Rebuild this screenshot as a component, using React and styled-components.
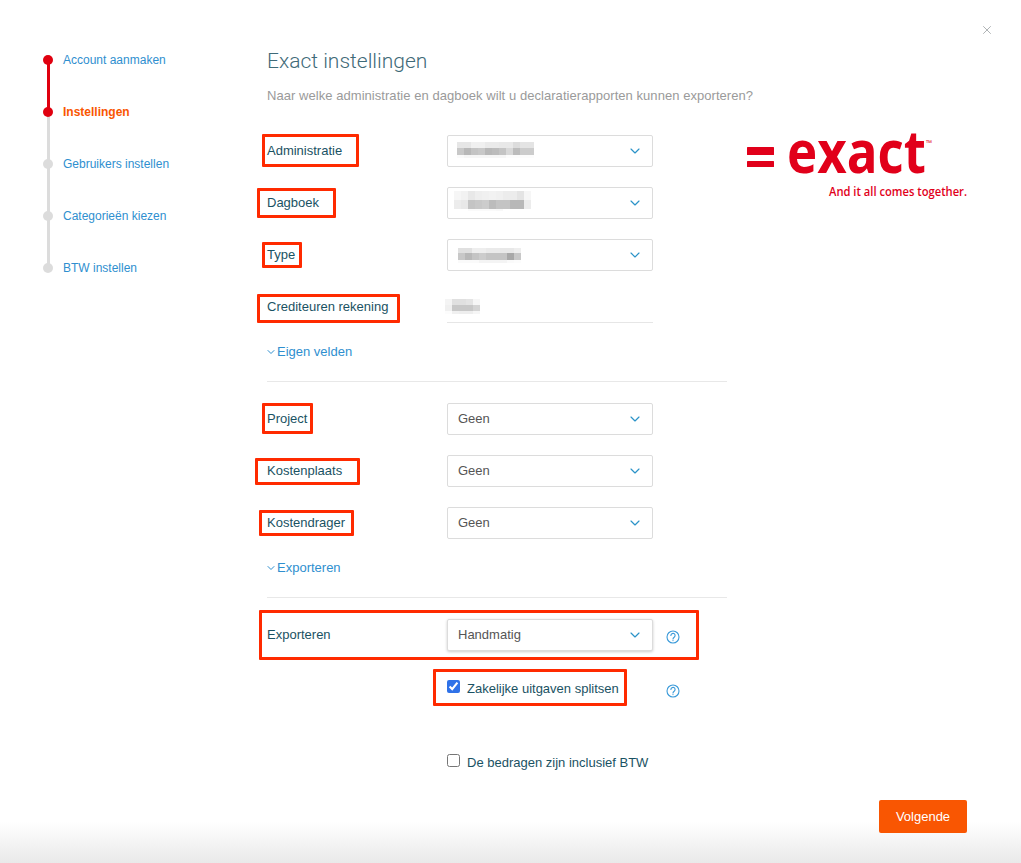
import React from "react";
import styled, { createGlobalStyle } from "styled-components";
import { ChevronDown, X } from "lucide-react";

const GlobalStyle = createGlobalStyle`
  html, body {
    margin: 0;
    padding: 0;
    background: #fff;
  }
  body {
    font-family: "Liberation Sans", Arial, sans-serif;
    font-size: 13px;
    color: #1a5263;
  }
`;

const Page = styled.div`
  position: relative;
  display: flex;
  width: 1021px;
  height: 863px;
  overflow: hidden;
  background: linear-gradient(to bottom, #fff 0, #fff 822px, #e9e9e9 863px);
`;

const CloseButton = styled.button`
  position: absolute;
  top: 23px;
  right: 27px;
  display: flex;
  padding: 0;
  border: 0;
  background: none;
  color: #a3a8aa;
`;

const Sidebar = styled.nav`
  width: 267px;
  flex: none;
  padding-top: 34px;
  box-sizing: border-box;
`;

const Step = styled.div`
  position: relative;
  display: flex;
  align-items: center;
  gap: 10px;
  height: 52px;
  padding-left: 43px;
  box-sizing: border-box;
  font-size: 12px;
  color: ${(p) => (p.$current ? "#f95602" : "#2f8fcf")};
  font-weight: ${(p) => (p.$current ? 700 : 400)};

  &::after {
    content: "";
    display: ${(p) => (p.$last ? "none" : "block")};
    position: absolute;
    left: 46.5px;
    top: 26px;
    width: 3px;
    height: 52px;
    background: ${(p) => (p.$done ? "#e0000f" : "#dcdcdc")};
  }
`;

const StepDot = styled.span`
  position: relative;
  z-index: 1;
  width: 10px;
  height: 10px;
  border-radius: 50%;
  background: ${(p) => (p.$active ? "#e0000f" : "#dcdcdc")};
`;

const Main = styled.main`
  flex: 1;
  min-width: 0;
  padding: 46px 54px 0 0;
`;

const Title = styled.h1`
  margin: 0;
  font-family: Roboto, "Liberation Sans", sans-serif;
  font-size: 21px;
  line-height: 30px;
  font-weight: 300;
  color: #3f6a78;
`;

const Subtitle = styled.p`
  margin: 10px 0 29px;
  font-size: 13px;
  line-height: 20px;
  letter-spacing: 0.05px;
  color: #9a9a9a;
`;

const Body = styled.div`
  display: flex;
  gap: 20px;
`;

const Form = styled.div`
  width: 460px;
  flex: none;
`;

const Row = styled.div`
  position: relative;
  display: flex;
  align-items: center;
  height: 32px;
  margin-bottom: ${(p) => (p.$tight ? 0 : "20px")};
`;

const Label = styled.label`
  width: 180px;
  flex: none;
  font-size: 13px;
  padding-bottom: 2px;
`;

const Select = styled.div`
  display: flex;
  align-items: center;
  justify-content: space-between;
  width: 206px;
  height: 32px;
  padding: 0 9px 0 10px;
  box-sizing: border-box;
  border: 1px solid #dcdcdc;
  border-radius: 2px;
  background: #fff;
  color: #555;
  box-shadow: ${(p) => (p.$raised ? "0 1px 3px rgba(0, 0, 0, 0.2)" : "none")};

  svg {
    color: #2b93c8;
  }
`;

const SelectText = styled.span`
  padding-bottom: 2px;
`;

const TextValue = styled.div`
  display: flex;
  align-items: center;
  width: 206px;
  height: 32px;
  box-sizing: border-box;
  border-bottom: 1px solid #e6e6e6;
`;

const MosaicGrid = styled.div`
  display: grid;
  grid-template-columns: repeat(${(p) => p.$cols}, 7px);
  grid-template-rows: ${(p) => p.$heights};
  filter: blur(0.4px);
  margin-left: ${(p) => p.$shift}px;
  margin-bottom: ${(p) => p.$lift}px;
`;

const MosaicCell = styled.span`
  background: ${(p) => p.$shade};
`;

const Mark = styled.span`
  position: absolute;
  left: ${(p) => p.$left}px;
  top: ${(p) => p.$top}px;
  width: ${(p) => p.$w}px;
  height: ${(p) => p.$h}px;
  box-sizing: border-box;
  border: 3px solid #ff2a00;
  border-radius: 1px;
  pointer-events: none;
`;

const MoreLink = styled.a`
  display: flex;
  align-items: center;
  margin-top: 20px;
  line-height: 18px;
  font-size: 13px;
  color: #2f8fcf;

  svg {
    margin-left: -2px;
  }
`;

const Divider = styled.hr`
  height: 1px;
  margin: 20px 0 21px;
  border: 0;
  background: #e8e8e8;
`;

const Help = styled.span`
  display: flex;
  margin-left: 13px;
  margin-top: ${(p) => p.$drop}px;
  color: #3a9ad9;
`;

const CheckRow = styled.div`
  position: relative;
  display: flex;
  align-items: center;
  height: 20px;
  margin-top: ${(p) => p.$top}px;
  padding-left: 180px;
`;

const Check = styled.input`
  width: 13px;
  height: 13px;
  margin: 0 7px 3px 0;
  accent-color: #2f72e8;
`;

const CheckText = styled.span`
  width: 186px;
  flex: none;
  white-space: nowrap;
`;

const Aside = styled.div`
  flex: none;
`;

const Logo = styled.svg`
  display: block;
  overflow: visible;
`;

const Footer = styled.div`
  display: flex;
  justify-content: flex-end;
  margin-top: 28px;
`;

const NextButton = styled.button`
  width: 88px;
  height: 33px;
  border: 0;
  border-radius: 2px;
  background: #f95602;
  color: #fff;
  font-family: inherit;
  font-size: 13px;
`;

const steps = [
  { name: "Account aanmaken", active: true, done: true },
  { name: "Instellingen", active: true, current: true },
  { name: "Gebruikers instellen" },
  { name: "Categorieën kiezen" },
  { name: "BTW instellen", last: true },
];

// stands in for the values blurred out in the screenshot, grey levels per row
const blurred = {
  administratie: {
    heights: "6px 7px 3px",
    shift: -1,
    lift: 3,
    rows: [
      "e6 e6 f0 f0 ea ea e8 e8 dc e4 e4",
      "c8 b8 c4 c8 b8 bc c4 d8 bc cc cc",
      "fa f6 f6 f6 f6 f6 f6 fc fc fc fc",
    ],
  },
  dagboek: {
    heights: "9px 9px 2px",
    shift: -4,
    lift: 5,
    rows: [
      "f6 f2 e8 ee f0 f2 f0 ec ec e4 f6",
      "ec e8 c4 c8 cc bc c4 c4 b8 b8 ec",
      "ff ff fa fa fa fa f8 ff ff ff ff",
    ],
  },
  type: {
    heights: "5px 7px 3px",
    shift: 0,
    lift: 0,
    rows: [
      "e0 e0 ee ee ea ea e8 e8 ee",
      "c8 b8 c4 cc c4 c4 c4 a8 c8",
      "fa fa fa f4 f4 f4 f4 fa fc",
    ],
  },
  crediteuren: {
    heights: "6px 6px 3px",
    shift: -2,
    lift: 1,
    rows: ["f4 e0 e0 e4 f6", "f0 c8 c8 c8 d4", "fc f0 ee ee f6"],
  },
};

const Mosaic = ({ name }) => {
  const { heights, shift, lift, rows } = blurred[name];
  const cells = rows.join(" ").split(" ");
  return (
    <MosaicGrid $cols={rows[0].split(" ").length} $heights={heights} $shift={shift} $lift={lift}>
      {cells.map((g, i) => (
        <MosaicCell key={i} $shade={`#${g}${g}${g}`} />
      ))}
    </MosaicGrid>
  );
};

const ExactLogo = () => (
  <Logo width="220" height="70" viewBox="0 0 220 70" role="img" aria-label="Exact">
    <rect x="0" y="12" width="27" height="8" rx="0.5" fill="#e1001a" />
    <rect x="0" y="26" width="27" height="6" rx="0.5" fill="#e1001a" />
    <text
      x="40"
      y="38"
      fontFamily="Open Sans, sans-serif"
      fontWeight="700"
      fontSize="59"
      textLength="139"
      lengthAdjust="spacingAndGlyphs"
      fill="#e1001a"
    >
      exact
    </text>
    <text x="179" y="11" fontFamily="Open Sans, sans-serif" fontSize="8" fill="#e1001a">
      ™
    </text>
    <text
      x="82"
      y="61"
      fontFamily="Open Sans, sans-serif"
      fontWeight="600"
      fontSize="12"
      textLength="138"
      lengthAdjust="spacingAndGlyphs"
      fill="#e1001a"
    >
      And it all comes together.
    </text>
  </Logo>
);

const QuestionIcon = ({ drop }) => (
  <Help $drop={drop}>
    <svg width="14" height="14" viewBox="0 0 14 14" fill="none" stroke="currentColor" strokeWidth="1.1">
      <circle cx="7" cy="7" r="6" />
      <path d="M4.9 5.5a2.1 2.1 0 1 1 3.3 1.7C7.4 7.8 7 8.2 7 9" strokeLinecap="round" />
      <circle cx="7" cy="10.6" r="0.6" fill="currentColor" stroke="none" />
    </svg>
  </Help>
);

const SelectField = ({ children, raised }) => (
  <Select $raised={raised}>
    {typeof children === "string" ? <SelectText>{children}</SelectText> : children}
    <ChevronDown size={16} strokeWidth={1.75} />
  </Select>
);

export default function App() {
  return (
    <>
      <GlobalStyle />
      <Page>
        <CloseButton aria-label="Sluiten">
          <X size={14} strokeWidth={1.5} />
        </CloseButton>

        <Sidebar>
          {steps.map((s) => (
            <Step key={s.name} $current={s.current} $done={s.done} $last={s.last}>
              <StepDot $active={s.active} />
              {s.name}
            </Step>
          ))}
        </Sidebar>

        <Main>
          <Title>Exact instellingen</Title>
          <Subtitle>Naar welke administratie en dagboek wilt u declaratierapporten kunnen exporteren?</Subtitle>

          <Body>
            <Form>
              <Row>
                <Label>Administratie</Label>
                <SelectField>
                  <Mosaic name="administratie" />
                </SelectField>
                <Mark $left={-5} $top={-1} $w={97} $h={33} />
              </Row>
              <Row>
                <Label>Dagboek</Label>
                <SelectField>
                  <Mosaic name="dagboek" />
                </SelectField>
                <Mark $left={-10} $top={1} $w={79} $h={30} />
              </Row>
              <Row>
                <Label>Type</Label>
                <SelectField>
                  <Mosaic name="type" />
                </SelectField>
                <Mark $left={-5} $top={3} $w={40} $h={26} />
              </Row>
              <Row $tight>
                <Label>Crediteuren rekening</Label>
                <TextValue>
                  <Mosaic name="crediteuren" />
                </TextValue>
                <Mark $left={-10} $top={3} $w={143} $h={29} />
              </Row>

              <MoreLink>
                <ChevronDown size={12} />
                Eigen velden
              </MoreLink>
              <Divider />

              <Row>
                <Label>Project</Label>
                <SelectField>Geen</SelectField>
                <Mark $left={-5} $top={0} $w={51} $h={31} />
              </Row>
              <Row>
                <Label>Kostenplaats</Label>
                <SelectField>Geen</SelectField>
                <Mark $left={-12} $top={3} $w={105} $h={27} />
              </Row>
              <Row $tight>
                <Label>Kostendrager</Label>
                <SelectField>Geen</SelectField>
                <Mark $left={-8} $top={3} $w={95} $h={26} />
              </Row>

              <MoreLink>
                <ChevronDown size={12} />
                Exporteren
              </MoreLink>
              <Divider />

              <Row $tight>
                <Label>Exporteren</Label>
                <SelectField raised>Handmatig</SelectField>
                <QuestionIcon drop={3} />
                <Mark $left={-8} $top={-9} $w={440} $h={50} />
              </Row>
              <CheckRow $top={27}>
                <Check type="checkbox" defaultChecked />
                <CheckText>Zakelijke uitgaven splitsen</CheckText>
                <QuestionIcon drop={6} />
                <Mark $left={166} $top={-9} $w={194} $h={37} />
              </CheckRow>
              <CheckRow $top={54}>
                <Check type="checkbox" />
                <CheckText>De bedragen zijn inclusief BTW</CheckText>
              </CheckRow>
            </Form>

            <Aside>
              <ExactLogo />
            </Aside>
          </Body>

          <Footer>
            <NextButton>Volgende</NextButton>
          </Footer>
        </Main>
      </Page>
    </>
  );
}
